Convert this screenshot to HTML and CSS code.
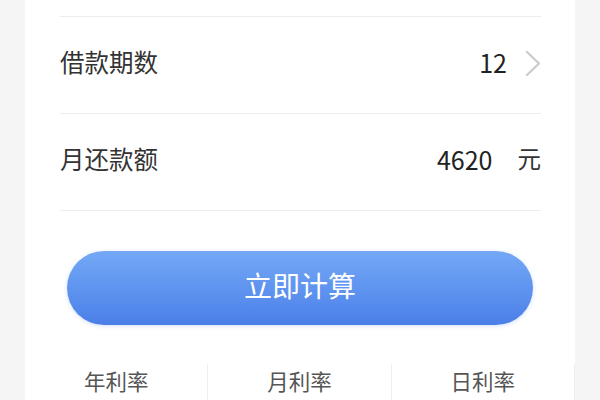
FILE: index.html
```html
<!DOCTYPE html>
<html lang="zh-CN">
<head>
<meta charset="utf-8">
<link rel="stylesheet" href="styles.css">
</head>
<body>
<div class="page">
  <div class="card">
    <div class="form">
      <div class="stub"></div>
      <div class="row">
        <span class="label">借款期数</span>
        <span class="value">
          <span class="num">12</span>
          <svg class="chev" width="16" height="27" viewBox="0 0 16 27"><polyline points="2,2 14,13.5 2,25" fill="none" stroke="#cccccc" stroke-width="2.4" stroke-linecap="round" stroke-linejoin="round"/></svg>
        </span>
      </div>
      <div class="row">
        <span class="label">月还款额</span>
        <span class="value">
          <span class="num">4620</span>
          <span class="unit">元</span>
        </span>
      </div>
      <button class="btn">立即计算</button>
    </div>
    <div class="tabs">
      <div class="tab">年利率</div>
      <div class="tab">月利率</div>
      <div class="tab">日利率</div>
    </div>
  </div>
</div>
</body>
</html>
```

FILE: styles.css
```css
* { box-sizing: border-box; }
html, body {
  margin: 0;
  padding: 0;
  background: #f5f5f5;
  font-family: "Noto Sans CJK SC", "Noto Sans", sans-serif;
}
.page {
  padding: 0 25px;
  height: 400px;
  overflow: hidden;
}
.card {
  background: #ffffff;
  height: 400px;
}
.form {
  padding: 0 34px 0 35px;
}
.stub {
  height: 17px;
  border-bottom: 1px solid #ececec;
}
.row {
  height: 97px;
  border-bottom: 1px solid #ececec;
  display: flex;
  align-items: center;
  justify-content: space-between;
  padding-bottom: 6px;
}
.label {
  font-size: 24.5px;
  color: #333333;
  line-height: 1;
}
.value {
  display: flex;
  align-items: center;
  color: #222222;
  line-height: 1;
}
.num {
  font-size: 25px;
}
.chev {
  margin-left: 18px;
  display: block;
  margin-top: 2px;
}
.unit {
  font-size: 23.5px;
  margin-left: 25px;
  color: #333333;
}
.btn {
  display: block;
  margin: 40px 8px 0 7px;
  width: calc(100% - 15px);
  height: 74px;
  border: none;
  border-radius: 37px;
  background: linear-gradient(to bottom, #74a8f5 0%, #5f94f0 50%, #4b7fe8 100%);
  box-shadow: 0 1px 4px rgba(80, 130, 230, 0.25);
  color: #ffffff;
  font-family: "Noto Sans CJK SC", "Noto Sans", sans-serif;
  font-size: 28px;
  padding: 0 0 6px 0;
}
.tabs {
  display: grid;
  grid-template-columns: 1fr 1fr 1fr;
  margin-top: 39px;
}
.tab {
  height: 36px;
  border-right: 1px solid #eeeeee;
  display: flex;
  align-items: center;
  justify-content: center;
  font-size: 21.5px;
  color: #555555;
  padding-bottom: 4px;
}
```
